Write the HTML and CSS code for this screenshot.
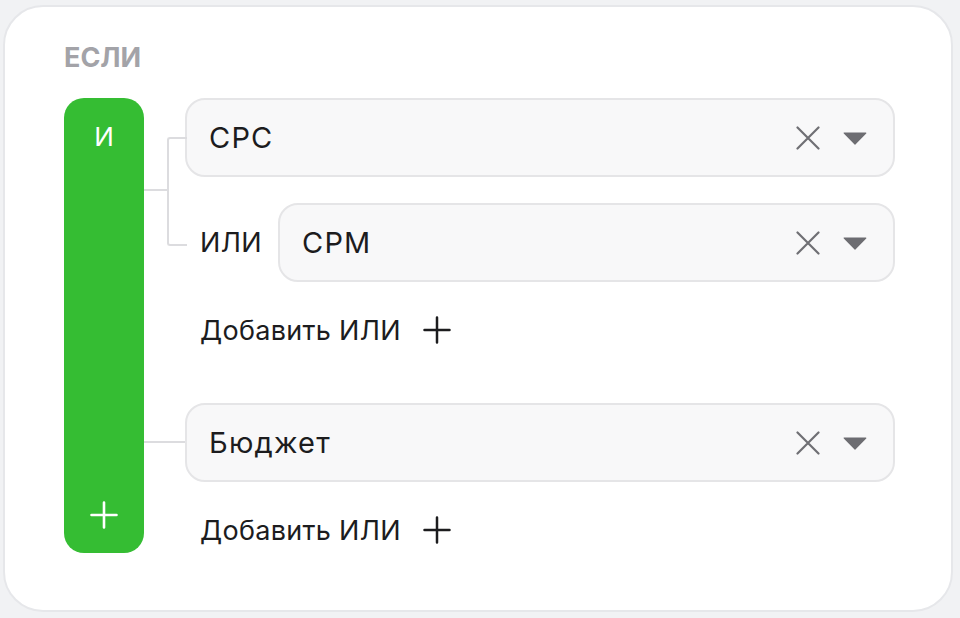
FILE: index.html
```html
<!DOCTYPE html>
<html lang="ru">
<head>
<meta charset="utf-8">
<title>Условие</title>
<link rel="stylesheet" href="styles.css">
</head>
<body>
<div class="card">
  <div class="title">ЕСЛИ</div>
  <div class="rule">
    <div class="and-bar">
      <span class="and-label">И</span>
      <svg class="and-plus" width="28" height="28" viewBox="0 0 28 28"><path d="M14 1.5v25M1.5 14h25" stroke="#fff" stroke-width="2.6" stroke-linecap="round" fill="none"/></svg>
    </div>
    <div class="groups">
      <div class="group group-multi">
        <div class="cond">
          <span class="cond-name">CPC</span>
          <span class="cond-actions">
            <svg class="ic-x" width="24" height="24" viewBox="0 0 24 24"><path d="M1.5 1.5l21 21M22.5 1.5l-21 21" stroke="#6f6f74" stroke-width="2.2" stroke-linecap="round" fill="none"/></svg>
            <svg class="ic-caret" width="24" height="13" viewBox="0 0 24 13"><path d="M1.2 1h21.6L12 12z" fill="#6d6d72" stroke="#6d6d72" stroke-width="1.2" stroke-linejoin="round"/></svg>
          </span>
        </div>
        <div class="or-row">
          <span class="or-label">ИЛИ</span>
          <div class="cond">
            <span class="cond-name">CPM</span>
            <span class="cond-actions">
              <svg class="ic-x" width="24" height="24" viewBox="0 0 24 24"><path d="M1.5 1.5l21 21M22.5 1.5l-21 21" stroke="#6f6f74" stroke-width="2.2" stroke-linecap="round" fill="none"/></svg>
              <svg class="ic-caret" width="24" height="13" viewBox="0 0 24 13"><path d="M1.2 1h21.6L12 12z" fill="#6d6d72" stroke="#6d6d72" stroke-width="1.2" stroke-linejoin="round"/></svg>
            </span>
          </div>
        </div>
        <button class="add-or" type="button">Добавить ИЛИ
          <svg width="28" height="28" viewBox="0 0 28 28"><path d="M14 1.5v25M1.5 14h25" stroke="#1c1c1e" stroke-width="2.5" stroke-linecap="round" fill="none"/></svg>
        </button>
      </div>
      <div class="group group-single">
        <div class="cond">
          <span class="cond-name">Бюджет</span>
          <span class="cond-actions">
            <svg class="ic-x" width="24" height="24" viewBox="0 0 24 24"><path d="M1.5 1.5l21 21M22.5 1.5l-21 21" stroke="#6f6f74" stroke-width="2.2" stroke-linecap="round" fill="none"/></svg>
            <svg class="ic-caret" width="24" height="13" viewBox="0 0 24 13"><path d="M1.2 1h21.6L12 12z" fill="#6d6d72" stroke="#6d6d72" stroke-width="1.2" stroke-linejoin="round"/></svg>
          </span>
        </div>
        <button class="add-or" type="button">Добавить ИЛИ
          <svg width="28" height="28" viewBox="0 0 28 28"><path d="M14 1.5v25M1.5 14h25" stroke="#1c1c1e" stroke-width="2.5" stroke-linecap="round" fill="none"/></svg>
        </button>
      </div>
    </div>
  </div>
</div>
</body>
</html>
```

FILE: styles.css
```css
* { box-sizing: border-box; }

html, body {
  margin: 0;
  padding: 0;
  height: 100%;
}

body {
  background: #f1f2f4;
  font-family: Inter, "Noto Sans", "DejaVu Sans", sans-serif;
  color: #1c1c1e;
  overflow: hidden;
}

.card {
  margin: 5px 7px 6px 3px;
  height: 607px;
  background: #ffffff;
  border: 2px solid #e6e7ea;
  border-radius: 40px;
  padding: 35px 56px 0 59px;
}

.title {
  font-size: 27px;
  line-height: 32px;
  font-weight: 700;
  color: #a3a3a8;
  margin-bottom: 24px;
}

.rule {
  display: flex;
  align-items: stretch;
}

.and-bar {
  width: 80px;
  flex-shrink: 0;
  background: #35bd33;
  border-radius: 20px;
  display: flex;
  flex-direction: column;
  align-items: center;
  justify-content: space-between;
  padding: 22px 0 24px;
  color: #ffffff;
}

.and-label {
  font-size: 26px;
  line-height: 34px;
  font-weight: 400;
}

.and-plus { display: block; }

.groups {
  flex: 1;
  margin-left: 41px;
  display: flex;
  flex-direction: column;
  gap: 53px;
  padding-bottom: 3px;
}

.group {
  position: relative;
  display: flex;
  flex-direction: column;
}

.group-multi .or-row { margin-top: 26px; }

/* connector bracket for the OR group */
.group-multi::before {
  content: "";
  position: absolute;
  left: -18px;
  top: 39px;
  width: 18px;
  height: 105px;
  border: 2px solid #dcdcdf;
  border-right: none;
  border-radius: 3px 0 0 3px;
}

.group-multi::after {
  content: "";
  position: absolute;
  left: -41px;
  top: 91px;
  width: 23px;
  height: 2px;
  background: #dcdcdf;
}

.group-single::before {
  content: "";
  position: absolute;
  left: -41px;
  top: 38px;
  width: 41px;
  height: 2px;
  background: #dcdcdf;
}

.cond {
  height: 79px;
  flex: none;
  display: flex;
  align-items: center;
  justify-content: space-between;
  background: #f8f8f9;
  border: 2px solid #e5e5e7;
  border-radius: 20px;
  padding: 0 26px 0 22px;
}

.or-row .cond { flex: 1 1 auto; }

.cond-name {
  font-size: 29px;
  font-weight: 400;
  line-height: 34px;
  letter-spacing: 1.2px;
  color: #1c1c1e;
}

.cond-actions {
  display: flex;
  align-items: center;
  gap: 23px;
}

.cond-actions svg { display: block; }

.ic-caret { margin-top: 2px; }

.or-row {
  display: flex;
  align-items: center;
}

.or-label {
  width: 93px;
  flex-shrink: 0;
  padding-left: 15px;
  font-size: 27px;
  font-weight: 400;
  line-height: 32px;
  letter-spacing: 0.4px;
}

.add-or {
  margin-top: 28px;
  height: 40px;
  align-self: flex-start;
  display: flex;
  align-items: center;
  gap: 22px;
  padding: 0 0 0 15px;
  border: none;
  background: none;
  font-family: inherit;
  font-size: 27px;
  font-weight: 400;
  letter-spacing: 0.3px;
  color: #1c1c1e;
  cursor: pointer;
}

.add-or svg { display: block; }
```
